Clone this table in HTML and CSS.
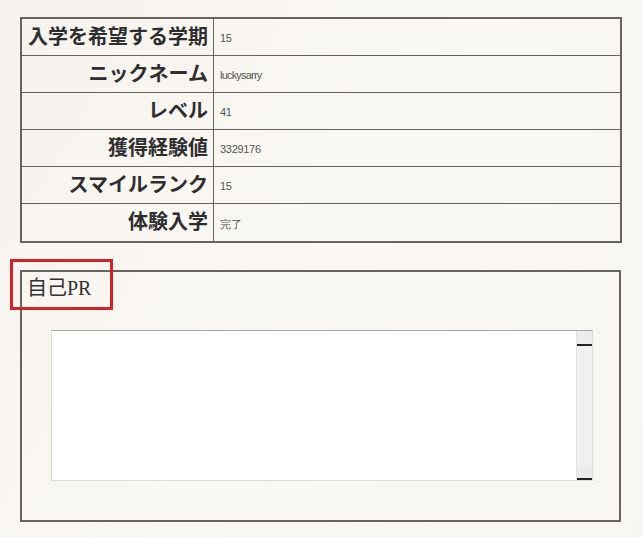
FILE: index.html
```html
<!DOCTYPE html>
<html lang="ja">
<head>
    <meta charset="UTF-8">
    <meta name="viewport" content="width=device-width, initial-scale=1.0">
    <title>プロフィール</title>
    <link rel="stylesheet" href="styles.css">
</head>
<body>

<div class="page">
    <table class="profile">
        <tr><th>入学を希望する学期</th><td>15</td></tr>
        <tr><th>ニックネーム</th><td class="name">luckysarry</td></tr>
        <tr><th>レベル</th><td>41</td></tr>
        <tr><th>獲得経験値</th><td>3329176</td></tr>
        <tr><th>スマイルランク</th><td>15</td></tr>
        <tr class="last"><th>体験入学</th><td>完了</td></tr>
    </table>

    <div class="pr-box">
        <span class="mark"></span>
        <h2>自己PR</h2>
        <div class="pr-field">
            <textarea class="pr-text"></textarea>
            <div class="scrollbar">
                <span class="arrow"></span>
                <span class="track"></span>
                <span class="arrow"></span>
            </div>
        </div>
    </div>
</div>

</body>
</html>
```

FILE: styles.css
```css
body {
    margin: 0;
    padding: 0;
    background: linear-gradient(120deg, #f6f3ee 0%, #faf8f4 50%, #f8f6f1 100%);
    color: #333;
    font-family: "Liberation Sans", Arial, sans-serif;
    height: 537px;
    overflow: hidden;
}
.page {
    padding: 17px 0 0 20px;
}
.profile {
    width: 602px;
    border-collapse: collapse;
    border: 2px solid #67635f;
}
.profile tr {
    height: 37px;
}
.profile tr.last {
    height: 39px;
}
.profile th,
.profile td {
    padding: 0;
    line-height: 20px;
    border: 1px solid #67635f;
}
.profile th {
    width: 186px;
    padding-right: 5px;
    text-align: right;
    font-family: "Liberation Serif", "Noto Sans CJK JP", serif;
    font-size: 20px;
    font-weight: bold;
    color: #2e2e2e;
}
.profile td {
    padding: 3px 0 0 6px;
    font-size: 11px;
    color: #555;
    letter-spacing: -0.3px;
}
.profile td.name {
    letter-spacing: -0.8px;
}
.pr-box {
    position: relative;
    width: 597px;
    height: 248px;
    margin-top: 27px;
    border: 2px solid #67635f;
}
.pr-box h2 {
    margin: 0;
    padding: 2px 0 0 5px;
    font-family: "Liberation Serif", "Noto Sans CJK JP", serif;
    font-size: 20px;
    font-weight: normal;
    color: #333;
    line-height: 28px;
}
.mark {
    position: absolute;
    left: -12px;
    top: -13px;
    width: 97px;
    height: 45px;
    border: 3px solid #d2232a;
}
.pr-field {
    display: flex;
    width: 540px;
    height: 149px;
    margin: 28px 0 0 29px;
    border: 1px solid #dcdcdc;
    border-top-color: #a8a8a8;
    background: #fff;
}
.pr-text {
    flex: 1;
    border: none;
    padding: 2px;
    background: #fff;
    resize: none;
    outline: none;
}
.scrollbar {
    display: flex;
    flex-direction: column;
    width: 15px;
    background: #f0f0f0;
    border-left: 1px solid #e2e2e2;
}
.scrollbar .arrow {
    height: 13px;
    background: #ebebeb;
    border-bottom: 2px solid #222;
}
.scrollbar .track {
    flex: 1;
}
```
